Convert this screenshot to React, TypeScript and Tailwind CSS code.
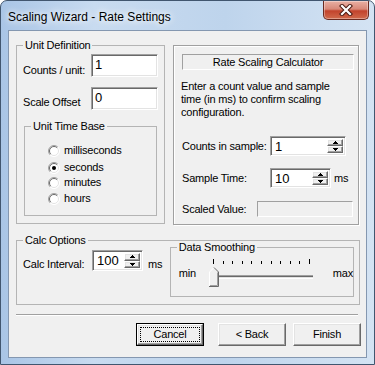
import type { ReactNode } from "react";

const sunken =
  "border border-t-[#a0a0a0] border-l-[#a0a0a0] border-r-white border-b-white shadow-[inset_1px_1px_0_#696969,inset_-1px_-1px_0_#e3e3e3]";
const raised =
  "border border-t-white border-l-white border-r-[#696969] border-b-[#696969] shadow-[inset_-1px_-1px_0_#a0a0a0,inset_1px_1px_0_#e3e3e3] bg-[#f0f0f0]";

function SpinBtn({ up }: { up?: boolean }) {
  return (
    <div className={`flex flex-1 items-center justify-center ${raised}`}>
      <svg width="5" height="3" viewBox="0 0 5 3" shapeRendering="crispEdges">
        <path
          d={up ? "M2 0h1v1h1v1h1v1H0V2h1V1h1z" : "M0 0h5v1H4v1H3v1H2V2H1V1H0z"}
          fill="#000"
        />
      </svg>
    </div>
  );
}

function SpinField({ value, className }: { value: string; className: string }) {
  return (
    <div className={`flex shrink-0 bg-white p-[2px] ${sunken} ${className}`}>
      <span className="flex-1 pl-[2px] text-[13px] leading-[15px] tracking-normal">{value}</span>
      <div className="flex w-[16px] flex-col">
        <SpinBtn up />
        <SpinBtn />
      </div>
    </div>
  );
}

function TextField({ value }: { value: string }) {
  return (
    <div className={`h-[23px] w-[67px] shrink-0 bg-white pl-[3px] pt-[2px] text-[13px] leading-[15px] tracking-normal ${sunken}`}>
      {value}
    </div>
  );
}

function Radio({ label, checked }: { label: string; checked?: boolean }) {
  return (
    <div className="ml-[23px] flex h-[15px] items-center gap-[4px]">
      <svg width="12" height="12" viewBox="0 0 12 12">
        <circle cx="6" cy="6" r="5.5" fill="#fff" />
        <path d="M2.11 9.89A5.5 5.5 0 0 1 9.89 2.11" stroke="#a0a0a0" fill="none" />
        <path d="M9.89 2.11A5.5 5.5 0 0 1 2.11 9.89" stroke="#fff" fill="none" />
        <path d="M2.8 9.2A4.5 4.5 0 0 1 9.2 2.8" stroke="#696969" fill="none" />
        <path d="M9.2 2.8A4.5 4.5 0 0 1 2.8 9.2" stroke="#e3e3e3" fill="none" />
        {checked && <circle cx="6" cy="6" r="2" fill="#000" />}
      </svg>
      <span>{label}</span>
    </div>
  );
}

function Group({ title, className, children }: { title: string; className: string; children?: ReactNode }) {
  return (
    <fieldset className={`border border-[#b4b4b4] ${className}`}>
      <legend className="ml-[6px] px-[2px] leading-[13px]">{title}</legend>
      {children}
    </fieldset>
  );
}

function Button({ label, isDefault }: { label: string; isDefault?: boolean }) {
  if (isDefault) {
    return (
      <div className="h-[23px] w-[68px] border border-black">
        <div className={`flex h-full w-full items-center justify-center p-[2px] ${raised}`}>
          <div className="flex h-full w-full items-center justify-center border border-dotted border-black">
            {label}
          </div>
        </div>
      </div>
    );
  }
  return (
    <div className={`flex h-[23px] w-[68px] items-center justify-center ${raised}`}>{label}</div>
  );
}

function Slider() {
  const ticks = Array.from({ length: 11 }, (_, i) => Math.round(8 + i * 9.6));
  return (
    <svg width="112" height="31" viewBox="0 0 112 31" shapeRendering="crispEdges" className="mt-[3px] shrink-0">
      {ticks.map((x, i) => (
        <rect key={i} x={x} y={i === 0 || i === 10 ? 2 : 4} width="1" height={i === 0 || i === 10 ? 5 : 3} fill="#000" />
      ))}
      <rect x="12" y="18" width="96" height="1" fill="#a0a0a0" />
      <rect x="12" y="19" width="96" height="1" fill="#696969" />
      <rect x="12" y="20" width="96" height="1" fill="#e3e3e3" />
      <rect x="12" y="21" width="96" height="1" fill="#fff" />
      <path d="M4 15L9 10L14 15V30H4Z" fill="#f0f0f0" shapeRendering="auto" />
      <path d="M4.5 30V15L9 10.5" stroke="#fff" fill="none" shapeRendering="auto" />
      <path d="M9 10.5L13.5 15V29.5H4" stroke="#696969" fill="none" shapeRendering="auto" />
      <path d="M12.5 15.5V28.5H5" stroke="#a0a0a0" fill="none" shapeRendering="auto" />
    </svg>
  );
}

export default function App() {
  return (
    <div className="h-[365px] w-[375px] overflow-hidden rounded-t-[7px] border border-[#41566f] bg-[linear-gradient(90deg,#a9c5e6_0%,#c8dbf0_25%,#bed4ec_60%,#d4e3f3_100%)] font-['Liberation_Sans',Arial,sans-serif] text-black">
      <div className="flex h-[29px] items-start">
        <div className="pl-[7px] pt-[8px] text-[12px] leading-[16px] [text-shadow:0_0_6px_#fff,0_0_10px_#fff]">
          Scaling Wizard - Rate Settings
        </div>
        <div className="mr-[5px] ml-auto flex h-[19px] w-[46px] items-center justify-center rounded-b-[5px] border border-t-0 border-[#6a2a20] bg-[linear-gradient(180deg,#e9b0a4_0%,#d88878_45%,#c2432c_55%,#d06a4c_100%)] shadow-[inset_0_0_0_1px_rgba(255,255,255,0.35)]">
          <svg width="14" height="12" viewBox="0 0 14 12">
            <path d="M3 2L11 10M11 2L3 10" stroke="#4a1a12" strokeWidth="4.2" strokeLinecap="square" />
            <path d="M3 2L11 10M11 2L3 10" stroke="#fff" strokeWidth="2.2" strokeLinecap="square" />
          </svg>
        </div>
      </div>

      <div className="ml-[7px] h-[328px] w-[359px] border border-[#8497b0] bg-[#f0f0f0] text-[11px] leading-[13px] tracking-[-0.2px] whitespace-nowrap">
        <div className="flex pl-[7px] pt-[8px]">
          <Group title="Unit Definition" className="h-[185px] w-[149px] shrink-0">
            <div className="mt-[2px] ml-[6px] flex items-end">
              <span className="w-[68px] shrink-0">Counts / unit:</span>
              <TextField value="1" />
            </div>
            <div className="mt-[10px] ml-[6px] flex items-end">
              <span className="w-[68px] shrink-0 pb-[1px]">Scale Offset</span>
              <TextField value="0" />
            </div>
            <Group title="Unit Time Base" className="mt-[10px] ml-[7px] h-[96px] w-[133px]">
              <div className="mt-[10px]">
                <Radio label="milliseconds" />
              </div>
              <div className="mt-[2px]">
                <Radio label="seconds" checked />
              </div>
              <Radio label="minutes" />
              <div className="mt-[1px]">
                <Radio label="hours" />
              </div>
            </Group>
          </Group>

          <div className="mt-[6px] ml-[8px] h-[180px] w-[186px] shrink-0 border border-[#a0a0a0] shadow-[inset_1px_1px_0_#fff,1px_1px_0_#fff]">
            <div className="mt-[8px] ml-[8px] flex h-[16px] w-[172px] items-center justify-center border border-t-[#a0a0a0] border-l-[#a0a0a0] border-r-white border-b-white">
              Rate Scaling Calculator
            </div>
            <p className="mt-[10px] ml-[7px]">
              Enter a count value and sample
              <br />
              time (in ms) to confirm scaling
              <br />
              configuration.
            </p>
            <div className="mt-[17px] ml-[8px] flex items-center">
              <span className="w-[88px] shrink-0">Counts in sample:</span>
              <SpinField value="1" className="h-[20px] w-[76px]" />
            </div>
            <div className="mt-[12px] ml-[8px] flex items-center">
              <span className="w-[88px] shrink-0">Sample Time:</span>
              <SpinField value="10" className="h-[20px] w-[61px]" />
              <span className="ml-[3px]">ms</span>
            </div>
            <div className="mt-[13px] ml-[8px] flex items-center">
              <span className="w-[75px] shrink-0">Scaled Value:</span>
              <div className="h-[16px] w-[96px] shrink-0 border border-t-[#a0a0a0] border-l-[#a0a0a0] border-r-white border-b-white" />
            </div>
          </div>
        </div>

        <Group title="Calc Options" className="mt-[9px] ml-[7px] h-[71px] w-[344px]">
          <div className="flex items-start">
            <div className="mt-[3px] ml-[6px] flex items-end">
              <span className="w-[69px] shrink-0">Calc Interval:</span>
              <SpinField value="100" className="h-[21px] w-[51px]" />
              <span className="ml-[5px]">ms</span>
            </div>
            <Group title="Data Smoothing" className="mt-[-6px] mr-[5px] ml-auto h-[56px] w-[181px] shrink-0">
              <div className="flex items-start">
                <span className="mt-[13px] ml-[8px] w-[26px] shrink-0">min</span>
                <Slider />
                <span className="mt-[13px] ml-[16px]">max</span>
              </div>
            </Group>
          </div>
        </Group>

        <div className="mt-[9px] ml-[7px] w-[342px] border-t border-b border-t-[#a0a0a0] border-b-white" />

        <div className="mt-[7px] flex">
          <div className="ml-[127px]">
            <Button label="Cancel" isDefault />
          </div>
          <div className="ml-[14px]">
            <Button label="< Back" />
          </div>
          <div className="ml-[7px]">
            <Button label="Finish" />
          </div>
        </div>
      </div>
    </div>
  );
}
